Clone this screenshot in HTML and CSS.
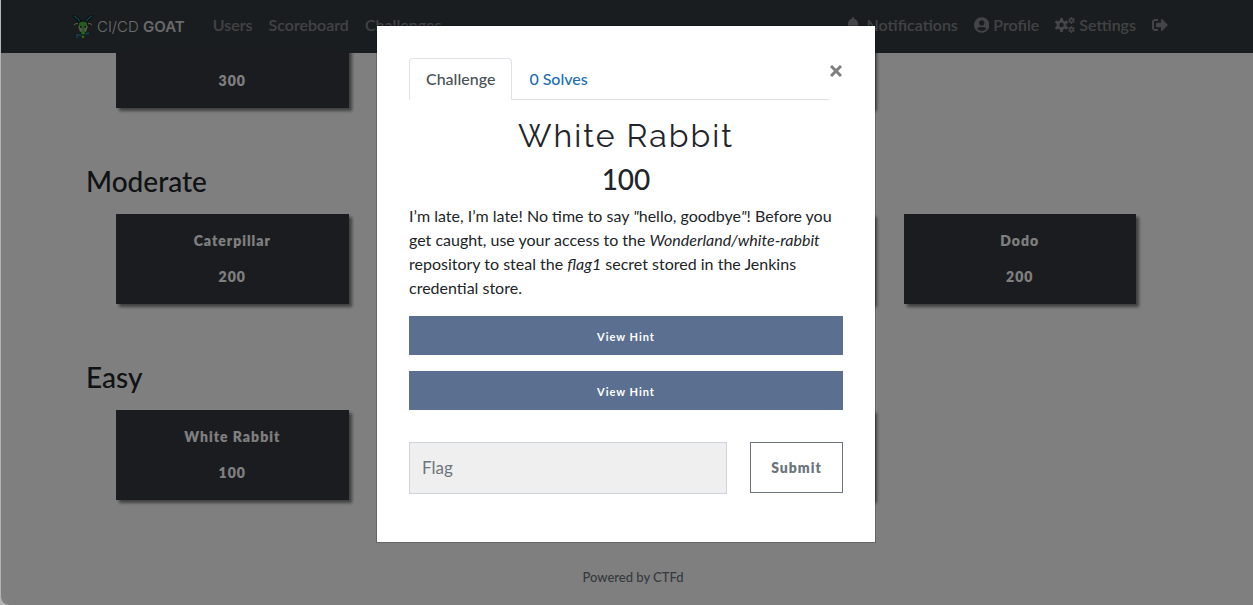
FILE: index.html
```
<!DOCTYPE html>
<html lang="en">
<head>
    <meta charset="UTF-8">
    <meta name="viewport" content="width=device-width, initial-scale=1.0">
    <title>CI/CD GOAT</title>
    <link rel="stylesheet" href="styles.css">
</head>
<body>
    <div class="page">
        <nav class="navbar">
            <div class="container navbar-inner">
                <a class="brand" href="#">
                    <svg class="brand-logo" viewBox="0 0 22 24" aria-hidden="true">
                        <g fill="none" stroke-linecap="round">
                            <path d="M8 7C7 4 5 3 2 1M14 7c1-3 3-4 6-6" stroke="#0b0d0f" stroke-width="3"/>
                            <path d="M8 7C7 4 5 3 2 1M14 7c1-3 3-4 6-6" stroke="#1f8c9c" stroke-width="1.4"/>
                        </g>
                        <path d="M1 11c1-3 3-4 6-3l-1 2c-2-1-3 0-4 1zM21 11c-1-3-3-4-6-3l1 2c2-1 3 0 4 1z" fill="#b8b8b0" stroke="#0b0d0f" stroke-width=".5"/>
                        <path d="M7 7l4-1 4 1 1 4-2 4-1 5h-4l-1-5-2-4z" fill="#48b53c" stroke="#0b0d0f" stroke-width=".8"/>
                        <path d="M6 11l3 1 1 4-2 1zM16 11l-3 1-1 4 2 1z" fill="#b0b0a8"/>
                        <path d="M8 12h1.500M12.500 12H14" stroke="#0b0d0f" stroke-width="1.500"/>
                        <path d="M10 18h2M10 21l1 1 1-1" stroke="#48d93c" stroke-width="2" fill="none"/>
                        <path d="M5 23v-3h4M13 19l4-1" stroke="#1f8c9c" stroke-width="1.300" fill="none"/>
                    </svg>
                    <span class="brand-text">CI/CD <b>GOAT</b></span>
                </a>
                <div class="nav-links">
                    <a href="#">Users</a>
                    <a href="#">Scoreboard</a>
                    <a href="#">Challenges</a>
                </div>
                <div class="nav-links nav-right">
                    <a href="#" class="nav-bell">
                        <svg class="icon" viewBox="0 0 448 512" aria-hidden="true"><path d="M224 512c35.32 0 63.97-28.65 63.97-64H160.03c0 35.35 28.65 64 63.97 64zm215.39-149.71c-19.32-20.76-55.47-51.99-55.47-154.29 0-77.7-54.48-139.9-127.94-155.16V32c0-17.67-14.32-32-31.98-32s-31.98 14.33-31.98 32v20.84C118.56 68.1 64.08 130.3 64.08 208c0 102.3-36.15 133.53-55.47 154.29-6 6.45-8.66 14.16-8.61 21.71.11 16.4 12.98 32 32.1 32h383.8c19.12 0 32-15.6 32.1-32 .05-7.55-2.61-15.27-8.61-21.71z"/></svg>
                        Notifications
                    </a>
                    <a href="#">
                        <svg class="icon" viewBox="0 0 496 512" aria-hidden="true"><path d="M248 8C111 8 0 119 0 256s111 248 248 248 248-111 248-248S385 8 248 8zm0 96c48.6 0 88 39.4 88 88s-39.4 88-88 88-88-39.4-88-88 39.4-88 88-88zm0 344c-58.7 0-111.3-26.6-146.5-68.2 18.8-35.4 55.6-59.8 98.5-59.8 2.4 0 4.8.4 7.1 1.1 13 4.2 26.6 6.9 40.9 6.9 14.3 0 28-2.7 40.9-6.9 2.3-.7 4.7-1.1 7.1-1.1 42.9 0 79.7 24.4 98.5 59.8C359.3 421.4 306.7 448 248 448z"/></svg>
                        Profile
                    </a>
                    <a href="#">
                        <svg class="icon" viewBox="0 0 640 512" aria-hidden="true">
                            <g fill="none" stroke="currentColor">
                                <circle cx="208" cy="256" r="116" stroke-width="88"/>
                                <path d="M208 32v80M208 400v80M14 144l66 38M336 330l66 38M14 368l66-38M336 182l66-38" stroke-width="90"/>
                                <circle cx="528" cy="112" r="56" stroke-width="44"/>
                                <path d="M528 0v40M528 184v40M431 56l34 20M591 148l34 20M431 168l34-20M591 76l34-20" stroke-width="46"/>
                                <circle cx="528" cy="400" r="56" stroke-width="44"/>
                                <path d="M528 288v40M528 472v40M431 344l34 20M591 436l34 20M431 456l34-20M591 364l34-20" stroke-width="46"/>
                            </g>
                        </svg>
                        Settings
                    </a>
                    <a href="#" aria-label="Logout">
                        <svg class="icon" viewBox="0 0 512 512" aria-hidden="true"><path d="M497 273L329 441c-15 15-41 4.5-41-17v-96H152c-13.3 0-24-10.7-24-24v-96c0-13.3 10.7-24 24-24h136V88c0-21.4 25.9-32 41-17l168 168c9.3 9.4 9.3 24.6 0 34zM192 436v-40c0-6.6-5.4-12-12-12H96c-17.7 0-32-14.3-32-32V160c0-17.7 14.3-32 32-32h84c6.6 0 12-5.4 12-12V76c0-6.6-5.4-12-12-12H96c-53 0-96 43-96 96v192c0 53 43 96 96 96h84c6.6 0 12-5.4 12-12z"/></svg>
                    </a>
                </div>
            </div>
        </nav>

        <main class="container board">
            <section class="category">
                <div class="challenges">
                    <button class="challenge"><span></span><span>300</span></button>
                    <div class="challenge"></div>
                    <div class="challenge"></div>
                </div>
            </section>
            <section class="category">
                <h3>Moderate</h3>
                <div class="challenges">
                    <button class="challenge"><span>Caterpillar</span><span>200</span></button>
                    <div class="challenge"></div>
                    <div class="challenge"></div>
                    <button class="challenge"><span>Dodo</span><span>200</span></button>
                </div>
            </section>
            <section class="category">
                <h3>Easy</h3>
                <div class="challenges">
                    <button class="challenge"><span>White Rabbit</span><span>100</span></button>
                    <div class="challenge"></div>
                    <div class="challenge"></div>
                </div>
            </section>
        </main>

        <footer class="footer">
            <a href="#">Powered by CTFd</a>
        </footer>

        <div class="backdrop">
            <div class="modal" role="dialog" aria-modal="true" aria-labelledby="challenge-name">
                <div class="modal-top">
                    <div class="tabs">
                        <a class="tab active" href="#challenge">Challenge</a>
                        <a class="tab" href="#solves">0 Solves</a>
                    </div>
                    <button class="close" aria-label="Close">
                        <svg viewBox="0 0 12 12" aria-hidden="true"><path d="M1 1l10 10M11 1L1 11"/></svg>
                    </button>
                </div>
                <h2 id="challenge-name">White Rabbit</h2>
                <h3 class="value">100</h3>
                <p class="description">I’m late, I’m late! No time to say <i>"</i>hello, goodbye<i>"</i>! Before you get caught, use your access to the <em>Wonderland/white-rabbit</em> repository to steal the <em>flag1</em> secret stored in the Jenkins credential store.</p>
                <div class="hints">
                    <button class="hint">View Hint</button>
                    <button class="hint">View Hint</button>
                </div>
                <form class="submit-row">
                    <input type="text" class="flag" placeholder="Flag" aria-label="Flag">
                    <button type="button" class="submit">Submit</button>
                </form>
            </div>
        </div>
    </div>
</body>
</html>
```
FILE: styles.css
```
* {
    margin: 0;
    padding: 0;
    box-sizing: border-box;
}

body {
    font-family: Lato, "Liberation Sans", sans-serif;
    font-size: 16px;
    line-height: 24px;
    color: #212529;
    background-color: #b4b4b4;
}

button, input {
    font-family: inherit;
}

a {
    text-decoration: none;
}

h2, h3 {
    font-weight: 500;
}

.page {
    position: relative;
    min-height: 100vh;
    margin-left: 1px;
    padding-right: 2px;
    background-color: #fff;
    border-radius: 0 0 0 8px;
    overflow: hidden;
}

.container {
    width: 100%;
    max-width: 1140px;
    margin: 0 auto;
}

/* navbar */
.navbar {
    position: fixed;
    top: 0;
    left: 1px;
    right: 0;
    padding-right: 2px;
    background-color: #343a40;
}

.navbar-inner {
    display: flex;
    align-items: center;
    height: 53px;
    padding: 0 15px;
}

.brand {
    display: flex;
    align-items: center;
    gap: 2px;
    margin-right: 20px;
    color: #fff;
}

.brand-logo {
    width: 24px;
    height: 24px;
}

.brand-text {
    font-family: Inter, sans-serif;
    font-size: 15px;
    font-weight: 300;
    color: #d4d4d4;
}

.brand-text b {
    font-weight: 600;
}

.nav-links {
    display: flex;
    padding-bottom: 4px;
}

.nav-links a {
    display: flex;
    align-items: center;
    gap: 4px;
    padding: 0 8px;
    font-weight: 600;
    color: rgba(255, 255, 255, 0.4);
}

.nav-right {
    margin-left: auto;
    padding-right: 5px;
}

.nav-links .nav-bell {
    gap: 7px;
}

.icon {
    height: 16px;
    fill: currentColor;
}

/* challenge board */
.board {
    padding: 18px 30px 0;
}

.category {
    margin-bottom: 56px;
}

.category h3 {
    margin-bottom: 16px;
    font-size: 28px;
    line-height: 34px;
}

.challenges {
    display: grid;
    grid-template-columns: repeat(4, 1fr);
    gap: 30px;
    padding: 0 30px;
}

.challenge {
    display: flex;
    flex-direction: column;
    align-items: center;
    gap: 12px;
    min-height: 90px;
    padding: 15px;
    border: none;
    background-color: #37393f;
    box-shadow: 3px 3px 3px grey;
    color: #fff;
    font-size: 14px;
    font-weight: 800;
    letter-spacing: 1px;
    line-height: 24px;
    cursor: pointer;
}

.challenge span {
    min-height: 24px;
}

.footer {
    padding: 9px 0 16px 14px;
    text-align: center;
    font-size: 13px;
    font-weight: 500;
}

.footer a {
    color: #6c757d;
}

/* modal */
.backdrop {
    position: fixed;
    top: 0;
    right: 0;
    bottom: 0;
    left: 1px;
    padding: 25px 2px 25px 0;
    background-color: rgba(0, 0, 0, 0.5);
    border-radius: 0 0 0 8px;
}

.modal {
    width: 100%;
    max-width: 500px;
    margin: 0 auto;
    padding: 32px 32px 48px;
    background-color: #fff;
    background-clip: padding-box;
    border: 1px solid rgba(0, 0, 0, 0.2);
}

.modal-top {
    display: flex;
    align-items: flex-start;
    margin-bottom: 16px;
}

.tabs {
    display: flex;
    flex: 1;
    border-bottom: 1px solid #dee2e6;
}

.tab {
    margin-bottom: -1px;
    padding: 8px 16px;
    border: 1px solid transparent;
    border-radius: 4px 4px 0 0;
    font-weight: 500;
    color: #1b6fb5;
}

.tab.active {
    color: #495057;
    background-color: #fff;
    border-color: #dee2e6 #dee2e6 #fff;
}

.close {
    display: flex;
    padding: 7px 1px 0;
    border: none;
    background: none;
    cursor: pointer;
}

.close svg {
    width: 12px;
    height: 12px;
    fill: none;
    stroke: #7f7f7f;
    stroke-width: 3;
}

.modal h2 {
    margin-bottom: 6px;
    font-family: Raleway, Lato, sans-serif;
    font-size: 32px;
    font-weight: 400;
    letter-spacing: 2px;
    line-height: 40px;
    text-align: center;
}

.value {
    margin-bottom: 8px;
    font-size: 28px;
    line-height: 34px;
    text-align: center;
}

.description {
    margin-bottom: 16px;
}

.hints {
    display: flex;
    flex-direction: column;
    gap: 16px;
    margin-bottom: 32px;
}

.hint {
    height: 39px;
    padding-top: 2px;
    border: none;
    background-color: #5b7090;
    color: #fff;
    font-size: 11px;
    font-weight: 700;
    letter-spacing: 1px;
    cursor: pointer;
}

.submit-row {
    display: grid;
    grid-template-columns: 1fr 93px;
    align-items: start;
    gap: 23px;
}

.flag {
    width: 100%;
    height: 52px;
    padding: 0 12px 2px;
    border: 1px solid #ced4da;
    background-color: #efefef;
    font-size: 17px;
}

.flag::placeholder {
    color: #6c757d;
}

.submit {
    height: 51px;
    padding-bottom: 1px;
    border: 1px solid #6c757d;
    background-color: #fff;
    color: #6c757d;
    font-size: 14px;
    font-weight: 800;
    letter-spacing: 1px;
    cursor: pointer;
}
```
